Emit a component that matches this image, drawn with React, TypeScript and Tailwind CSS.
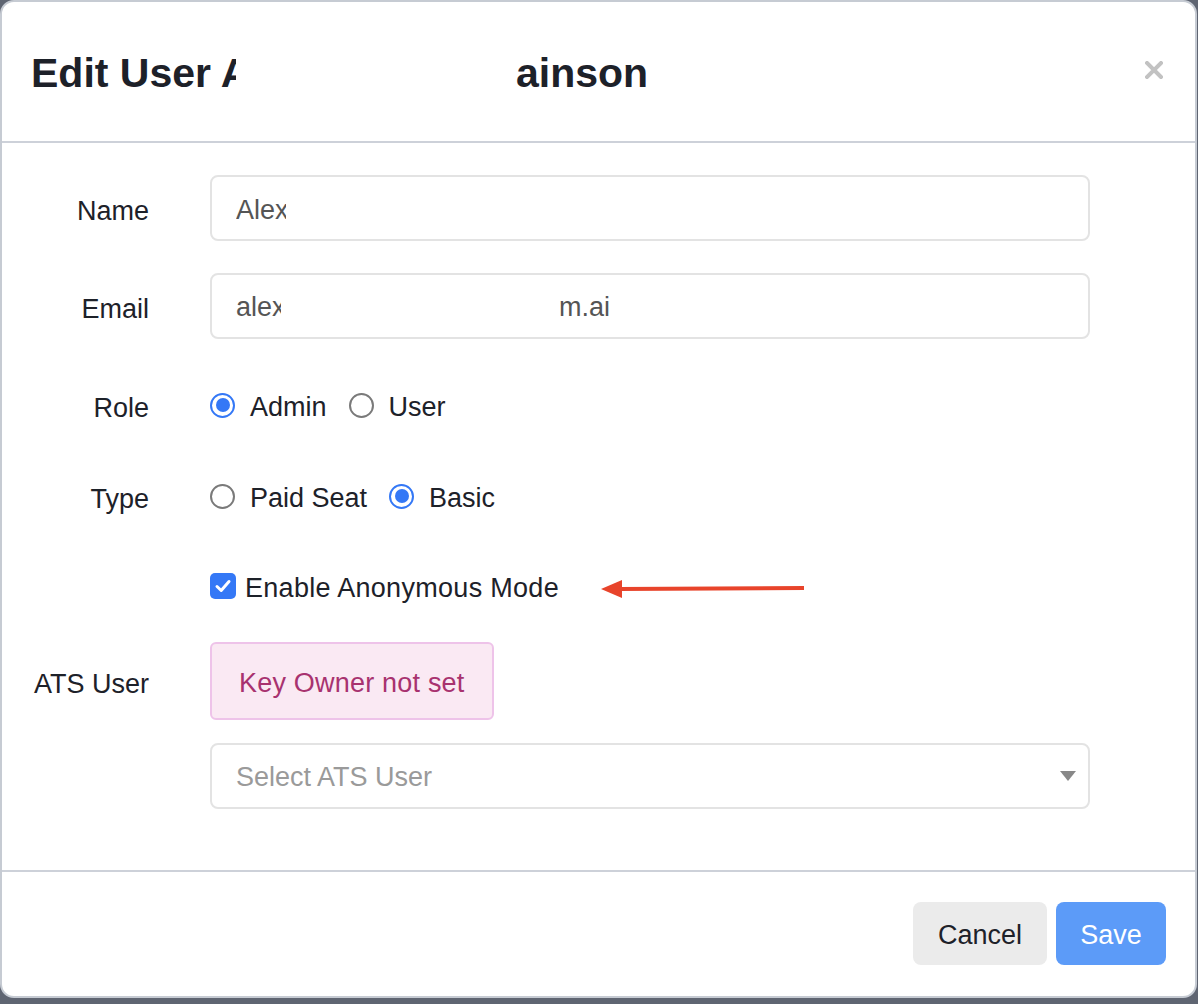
import React, { useState } from "react";

const font = { fontFamily: '"Liberation Sans", Arial, Helvetica, sans-serif' };

function Radio({ checked }: { checked: boolean }) {
  return checked ? (
    <span className="flex h-[25px] w-[25px] shrink-0 items-center justify-center rounded-full border-[2.5px] border-[#3478f6] bg-white">
      <span className="h-[14px] w-[14px] rounded-full bg-[#3478f6]" />
    </span>
  ) : (
    <span className="h-[25px] w-[25px] shrink-0 rounded-full border-[2px] border-[#7a7a7a] bg-white" />
  );
}

function Row({ label, className, children }: { label?: string; className?: string; children: React.ReactNode }) {
  return (
    <div className={"flex items-center " + (className ?? "")}>
      <div className="w-[147px] shrink-0 pt-[6px] text-right text-[27px] text-[#1d2129]">{label}</div>
      <div className="ml-[61px] flex-1">{children}</div>
    </div>
  );
}

export default function App() {
  const [role, setRole] = useState("admin");
  const [type, setType] = useState("basic");
  const [anon, setAnon] = useState(true);

  return (
    <div className="h-[1004px] w-[1198px] overflow-hidden bg-[#5f6572]" style={font}>
      <div className="flex h-[998px] w-[1197px] flex-col rounded-[14px] border-2 border-[#c6cbd3] bg-white">
        {/* header */}
        <div className="flex h-[141px] items-center justify-between border-b-2 border-[#cdd1d9] pl-[29px] pr-[32px] pt-[4px]">
          <h2 className="flex whitespace-nowrap text-[41px] font-bold text-[#1d2129]">
            <span className="inline-block w-[205px] overflow-hidden">Edit User A</span>
            <span className="ml-[280px]">ainson</span>
          </h2>
          <button className="mb-[8px] cursor-pointer">
            <svg width="18" height="18" viewBox="0 0 18 18">
              <path d="M2 2 L16 16 M16 2 L2 16" stroke="#c2c2c2" strokeWidth="4" strokeLinecap="square" />
            </svg>
          </button>
        </div>

        {/* body */}
        <div className="flex-1 pr-[105px] pt-[32px]">
          <Row label="Name">
            <div className="flex h-[66px] items-center rounded-[8px] border-2 border-[#e3e3e3] px-[24px] pt-[4px] text-[27px] text-[#555]">
              <span className="inline-block w-[50px] overflow-hidden whitespace-nowrap">Alex</span>
            </div>
          </Row>
          <Row label="Email" className="mt-[32px]">
            <div className="flex h-[66px] items-center rounded-[8px] border-2 border-[#e3e3e3] px-[24px] pt-[2px] text-[27px] text-[#555]">
              <span className="inline-block w-[45px] overflow-hidden whitespace-nowrap">alex</span>
              <span className="ml-[278px] inline-block overflow-hidden whitespace-nowrap">m.ai</span>
            </div>
          </Row>
          <Row label="Role" className="mt-[41px] h-[50px]">
            <div className="flex items-center text-[27px] text-[#1d2129]">
              <label className="flex cursor-pointer items-center" onClick={() => setRole("admin")}>
                <Radio checked={role === "admin"} />
                <span className="ml-[15px] pt-[5px]">Admin</span>
              </label>
              <label className="ml-[22px] flex cursor-pointer items-center" onClick={() => setRole("user")}>
                <Radio checked={role === "user"} />
                <span className="ml-[15px] pt-[5px]">User</span>
              </label>
            </div>
          </Row>
          <Row label="Type" className="mt-[41px] h-[50px]">
            <div className="flex items-center text-[27px] text-[#1d2129]">
              <label className="flex cursor-pointer items-center" onClick={() => setType("paid")}>
                <Radio checked={type === "paid"} />
                <span className="ml-[15px] pt-[5px]">Paid Seat</span>
              </label>
              <label className="ml-[22px] flex cursor-pointer items-center" onClick={() => setType("basic")}>
                <Radio checked={type === "basic"} />
                <span className="ml-[15px] pt-[5px]">Basic</span>
              </label>
            </div>
          </Row>
          <Row className="mt-[40px] h-[50px]">
            <div className="flex items-center text-[27px] text-[#1d2129]">
              <label className="flex cursor-pointer items-center" onClick={() => setAnon(!anon)}>
                {anon ? (
                  <span className="flex h-[26px] w-[26px] items-center justify-center rounded-[5px] bg-[#3478f6]">
                    <svg width="18" height="18" viewBox="0 0 18 18">
                      <path d="M3 9.5 L7.2 13.5 L15 4.5" fill="none" stroke="white" strokeWidth="3" strokeLinecap="round" strokeLinejoin="round" />
                    </svg>
                  </span>
                ) : (
                  <span className="h-[26px] w-[26px] rounded-[5px] border-2 border-[#7a7a7a]" />
                )}
                <span className="ml-[9px] pt-[5px] tracking-[0.3px]">Enable Anonymous Mode</span>
              </label>
              <svg className="ml-[42px] mt-[5px]" width="204" height="22" viewBox="0 0 204 22">
                <path d="M18 11 L203 10" stroke="#e8442b" strokeWidth="4" />
                <path d="M0 11 L21 2 L21 20 Z" fill="#e8442b" />
              </svg>
            </div>
          </Row>
          <Row label="ATS User" className="mt-[31px]">
            <div className="inline-flex h-[78px] items-center rounded-[6px] border-2 border-[#eec3e9] bg-[#fae9f3] px-[27px] pt-[4px] text-[27px] tracking-[0.2px] text-[#a8326f]">
              Key Owner not set
            </div>
          </Row>
          <Row className="mt-[23px]">
            <div className="flex h-[66px] items-center justify-between rounded-[8px] border-2 border-[#e3e3e3] pl-[24px] pr-[12px] text-[27px] text-[#9a9a9a]">
              <span className="pt-[3px]">Select ATS User</span>
              <svg width="16" height="10" viewBox="0 0 16 10">
                <path d="M0 0 L16 0 L8 10 Z" fill="#888" />
              </svg>
            </div>
          </Row>
        </div>

        {/* footer */}
        <div className="flex h-[126px] items-start justify-end gap-[9px] border-t-2 border-[#cdd1d9] pr-[29px] pt-[30px]">
          <button className="h-[63px] w-[134px] cursor-pointer rounded-[8px] bg-[#ebebeb] pt-[3px] text-[27px] text-[#1d2129]">Cancel</button>
          <button className="h-[63px] w-[110px] cursor-pointer rounded-[8px] bg-[#5c9bf8] pt-[3px] text-[27px] text-white">Save</button>
        </div>
      </div>
    </div>
  );
}
